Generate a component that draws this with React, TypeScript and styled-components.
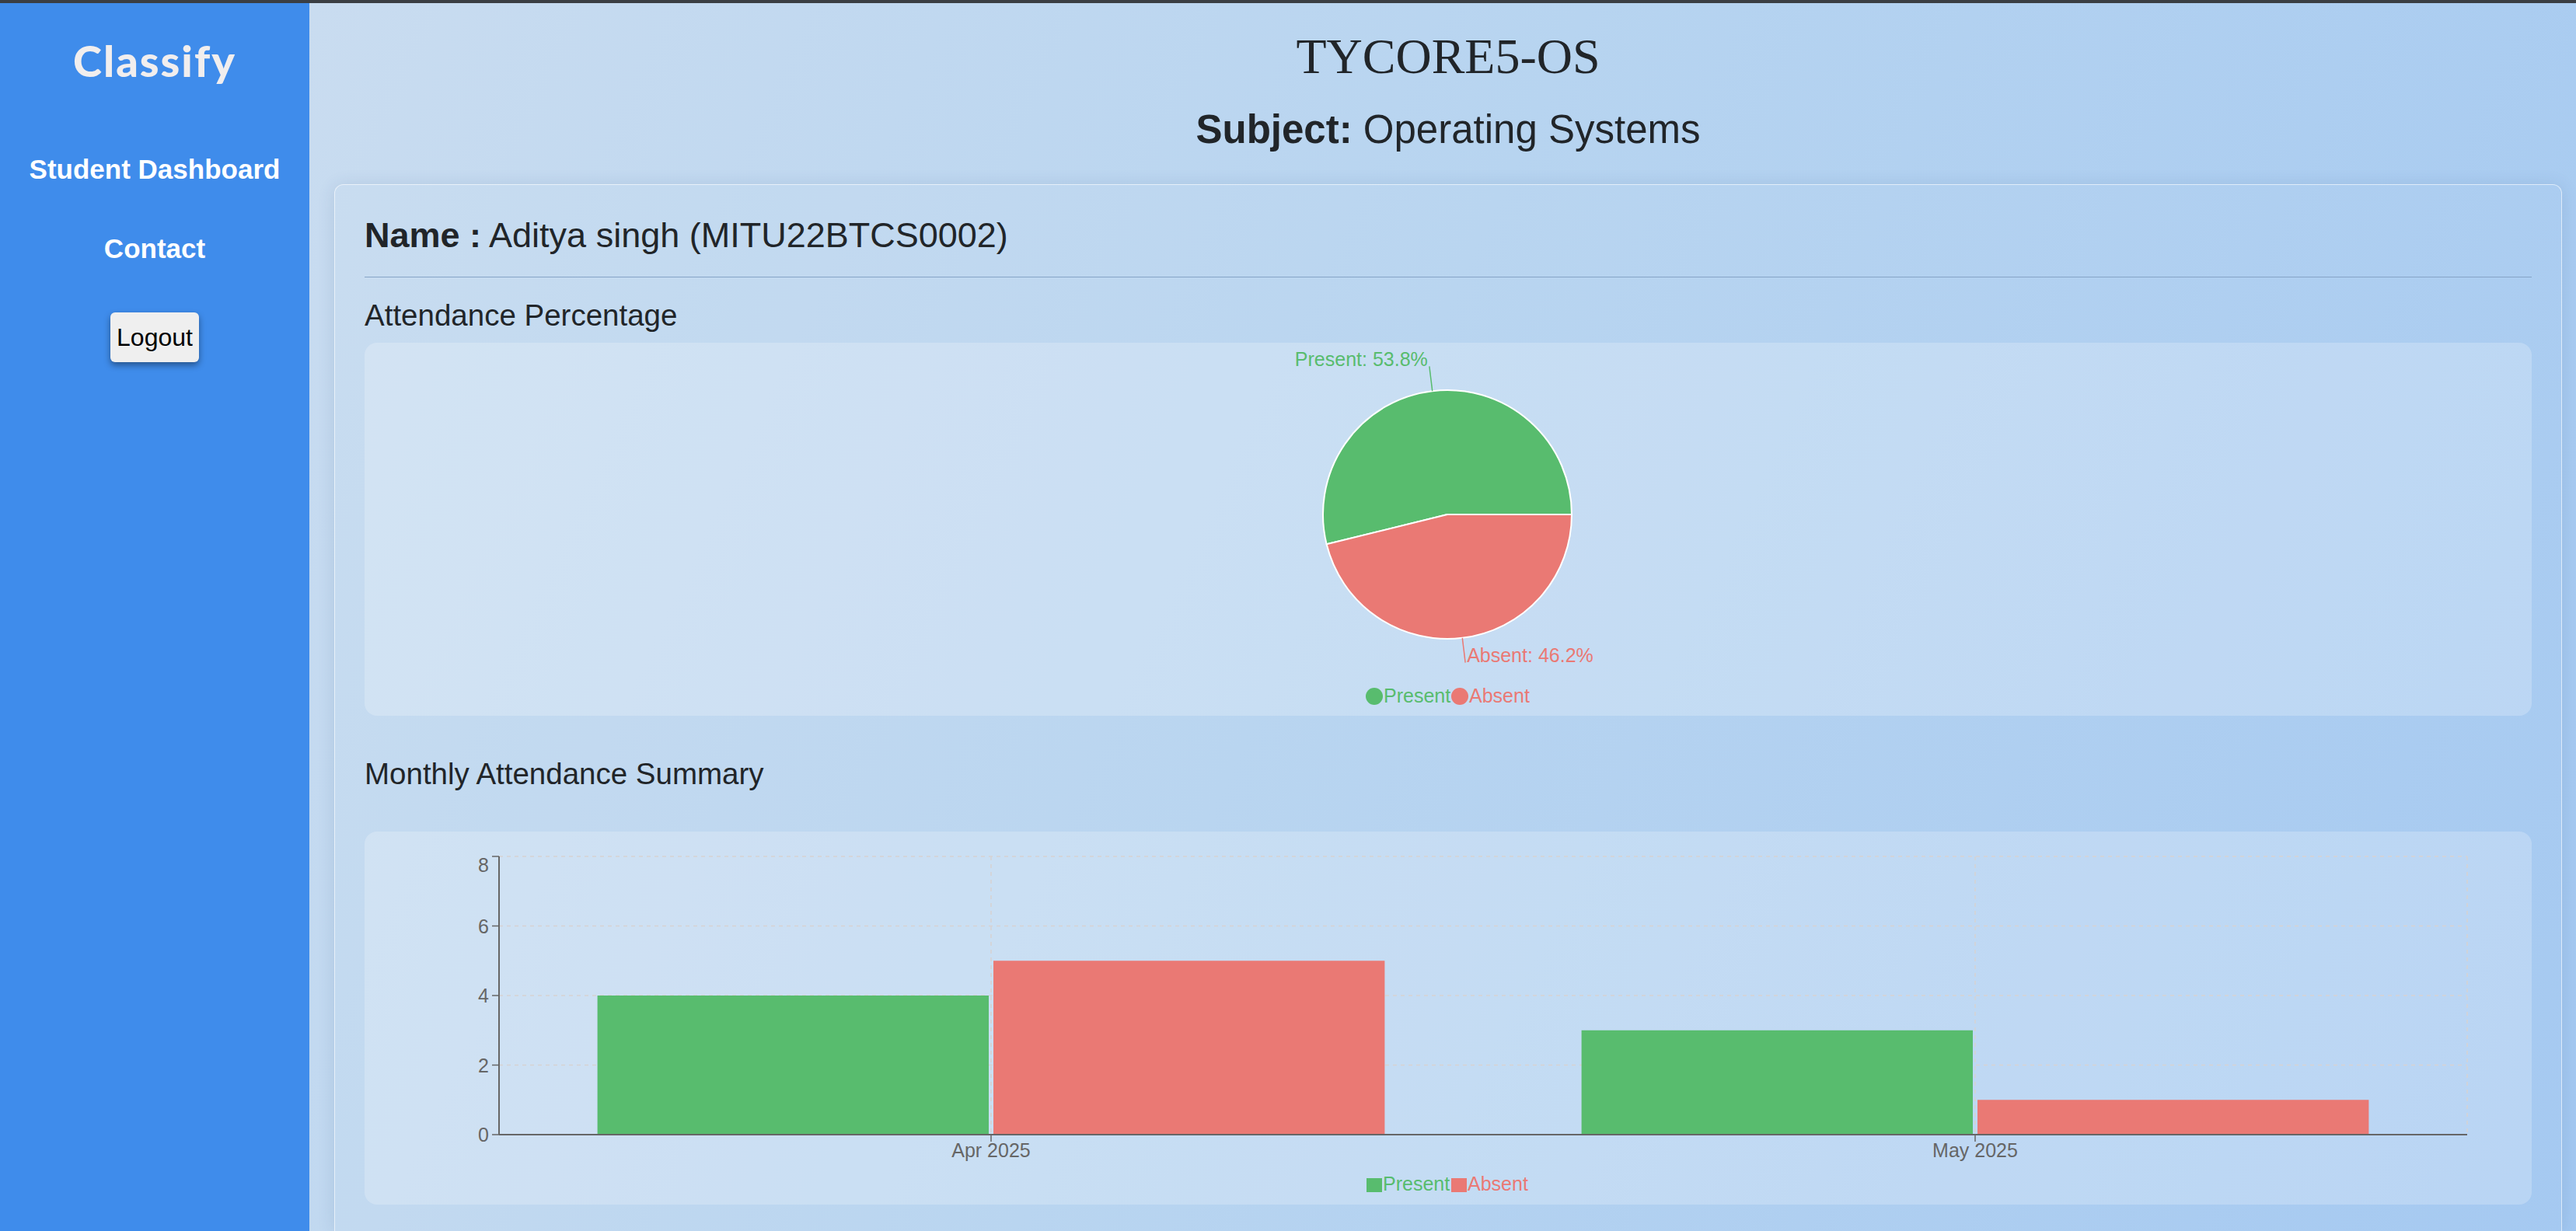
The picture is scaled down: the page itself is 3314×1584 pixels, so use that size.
import React from "react";
import styled, { createGlobalStyle } from "styled-components";

const GREEN = "#58bc6e";
const RED = "#ea7974";
const AXIS = "#666666";
const GRID = "#d6d2d2";

const summary = { present: 7, absent: 6 };

const monthly = [
  { month: "Apr 2025", present: 4, absent: 5 },
  { month: "May 2025", present: 3, absent: 1 },
];

const GlobalStyle = createGlobalStyle`
  html, body {
    margin: 0;
    padding: 0;
    overflow: hidden;
  }
  body {
    font-family: "Liberation Sans", Arial, sans-serif;
    color: #212529;
  }
  * {
    box-sizing: border-box;
  }
`;

const Page = styled.div`
  display: flex;
  height: 1584px;
  border-top: 4px solid #3a3e43;
`;

const Sidebar = styled.nav`
  width: 398px;
  flex-shrink: 0;
  background: #3f8ceb;
  display: flex;
  flex-direction: column;
  align-items: center;
  padding-top: 46px;
`;

const Brand = styled.div`
  font-family: Lato, "Open Sans", sans-serif;
  font-weight: 900;
  font-size: 56px;
  line-height: 1;
  letter-spacing: 2px;
  color: #f1eeee;
`;

const NavLink = styled.a<{ $gap: number }>`
  margin-top: ${(p) => p.$gap}px;
  font-size: 35px;
  font-weight: bold;
  line-height: 1;
  color: #ffffff;
  text-decoration: none;
  cursor: pointer;
`;

const LogoutButton = styled.button`
  margin-top: 65px;
  height: 64px;
  padding: 0 8px;
  font-family: "Liberation Sans", Arial, sans-serif;
  font-size: 32px;
  line-height: 1;
  color: #000;
  background: #efefef;
  border: none;
  border-radius: 6px;
  box-shadow: 0 4px 9px rgba(0, 0, 0, 0.4);
  cursor: pointer;
`;

const Main = styled.main`
  flex: 1;
  min-width: 0;
  overflow: hidden;
  display: flex;
  flex-direction: column;
  padding: 37px 18px 0 32px;
  background: linear-gradient(115deg, #c9dcf0 0%, #b7d4f0 45%, #a3c8f1 100%);
`;

const CourseCode = styled.h1`
  margin: 0;
  font-family: "Liberation Serif", "Times New Roman", serif;
  font-weight: normal;
  font-size: 64px;
  line-height: 1;
  text-align: center;
  color: #212529;
`;

const SubjectLine = styled.h2`
  margin: 36px 0 0;
  font-size: 51px;
  font-weight: normal;
  line-height: 1;
  text-align: center;
  color: #212529;

  strong {
    font-weight: bold;
  }
`;

const Card = styled.section`
  margin-top: 45px;
  flex: 1;
  padding: 42px 38px 0;
  border: 1px solid rgba(255, 255, 255, 0.6);
  border-bottom: none;
  border-radius: 12px 12px 0 0;
  background: rgba(255, 255, 255, 0.03);
  box-shadow: 0 2px 22px rgba(40, 80, 130, 0.14);
`;

const NameLine = styled.div`
  font-size: 45px;
  line-height: 1;
  color: #212529;

  strong {
    font-weight: bold;
  }
`;

const Divider = styled.hr`
  margin: 31px 0 0;
  border: none;
  border-top: 1px solid #86a4c7;
`;

const SectionTitle = styled.h3<{ $gap: number }>`
  margin: ${(p) => p.$gap}px 0 0;
  font-size: 38.5px;
  font-weight: normal;
  line-height: 1;
  color: #212529;
`;

const ChartBox = styled.div<{ $gap: number }>`
  margin-top: ${(p) => p.$gap}px;
  height: 480px;
  display: flex;
  justify-content: center;
  border-radius: 16px;
  background: rgba(255, 255, 255, 0.22);
  overflow: hidden;
`;

const ChartText = styled.text`
  font-family: "Liberation Sans", Arial, sans-serif;
  font-size: 25px;
`;

const polar = (cx: number, cy: number, r: number, deg: number) => {
  const a = (deg * Math.PI) / 180;
  return { x: cx + r * Math.cos(a), y: cy - r * Math.sin(a) };
};

const AttendancePie: React.FC = () => {
  const cx = 319;
  const cy = 221;
  const r = 160;
  const total = summary.present + summary.absent;
  const slices = [
    { name: "Present", value: summary.present, color: GREEN },
    { name: "Absent", value: summary.absent, color: RED },
  ];

  let start = 0;
  const drawn = slices.map((s) => {
    const sweep = (s.value / total) * 360;
    const end = start + sweep;
    const p1 = polar(cx, cy, r, start);
    const p2 = polar(cx, cy, r, end);
    const mid = start + sweep / 2;
    const inner = polar(cx, cy, r, mid);
    const outer = polar(cx, cy, r + 32, mid);
    const d = `M${cx},${cy} L${p1.x},${p1.y} A${r},${r} 0 ${sweep > 180 ? 1 : 0} 0 ${p2.x},${p2.y} Z`;
    start = end;
    return { ...s, d, inner, outer, pct: ((s.value / total) * 100).toFixed(1), right: outer.x > cx };
  });

  return (
    <svg width="640" height="480">
      {drawn.map((s) => (
        <path key={s.name} d={s.d} fill={s.color} stroke="#ffffff" strokeWidth="2" />
      ))}
      {drawn.map((s) => (
        <g key={`l-${s.name}`}>
          <line x1={s.inner.x} y1={s.inner.y} x2={s.outer.x} y2={s.outer.y} stroke={s.color} strokeWidth="1.5" />
          <ChartText
            x={s.right ? s.outer.x + 2 : s.outer.x - 2}
            y={s.right ? s.outer.y - 1 : s.outer.y}
            textAnchor={s.right ? "start" : "end"}
            fill={s.color}
          >
            {s.name}: {s.pct}%
          </ChartText>
        </g>
      ))}
      <circle cx="225" cy="455" r="11" fill={GREEN} />
      <ChartText x="237" y="463" fill={GREEN}>Present</ChartText>
      <circle cx="335" cy="455" r="11" fill={RED} />
      <ChartText x="347" y="463" fill={RED}>Absent</ChartText>
    </svg>
  );
};

const MonthlyBars: React.FC = () => {
  const W = 2788;
  const left = 173;
  const right = 2705;
  const top = 32;
  const bottom = 390;
  const max = 8;
  const yOf = (v: number) => bottom - (v / max) * (bottom - top);
  const band = (right - left) / monthly.length;
  const barW = (band * 0.8 - 6) / 2;
  const ticks = [0, 2, 4, 6, 8];

  return (
    <svg width="100%" height="480" viewBox={`0 0 ${W} 480`}>
      {ticks.slice(1).map((t) => (
        <line key={`g${t}`} x1={left} x2={right} y1={yOf(t)} y2={yOf(t)} stroke={GRID} strokeWidth="1.5" strokeDasharray="5 5" />
      ))}
      {monthly.map((m, i) => {
        const c = left + band * (i + 0.5);
        return <line key={`v${m.month}`} x1={c} x2={c} y1={top} y2={bottom} stroke={GRID} strokeWidth="1.5" strokeDasharray="5 5" />;
      })}
      <line x1={right} x2={right} y1={top} y2={bottom} stroke={GRID} strokeWidth="1.5" strokeDasharray="5 5" />

      {monthly.map((m, i) => {
        const x0 = left + band * i + band * 0.1;
        return (
          <g key={m.month}>
            <rect x={x0} y={yOf(m.present)} width={barW} height={bottom - yOf(m.present)} fill={GREEN} />
            <rect x={x0 + barW + 6} y={yOf(m.absent)} width={barW} height={bottom - yOf(m.absent)} fill={RED} />
          </g>
        );
      })}

      <line x1={left} x2={left} y1={top} y2={bottom} stroke={AXIS} strokeWidth="2" />
      <line x1={left} x2={right} y1={bottom} y2={bottom} stroke={AXIS} strokeWidth="2" />
      {ticks.map((t) => (
        <g key={`t${t}`}>
          <line x1={left - 9} x2={left} y1={yOf(t)} y2={yOf(t)} stroke={AXIS} strokeWidth="1.5" />
          <ChartText x={left - 13} y={t === max ? yOf(t) + 20 : yOf(t) + 9} textAnchor="end" fill={AXIS}>
            {t}
          </ChartText>
        </g>
      ))}
      {monthly.map((m, i) => {
        const c = left + band * (i + 0.5);
        return (
          <g key={`x${m.month}`}>
            <line x1={c} x2={c} y1={bottom} y2={bottom + 9} stroke={AXIS} strokeWidth="1.5" />
            <ChartText x={c} y={bottom + 29} textAnchor="middle" fill={AXIS}>
              {m.month}
            </ChartText>
          </g>
        );
      })}

      <rect x="1289" y="446" width="20" height="18" fill={GREEN} />
      <ChartText x="1310" y="462" fill={GREEN}>Present</ChartText>
      <rect x="1398" y="446" width="20" height="18" fill={RED} />
      <ChartText x="1419" y="462" fill={RED}>Absent</ChartText>
    </svg>
  );
};

const App: React.FC = () => {
  return (
    <>
      <GlobalStyle />
      <Page>
        <Sidebar>
          <Brand>Classify</Brand>
          <NavLink $gap={94}>Student Dashboard</NavLink>
          <NavLink $gap={67}>Contact</NavLink>
          <LogoutButton type="button">Logout</LogoutButton>
        </Sidebar>
        <Main>
          <CourseCode>TYCORE5-OS</CourseCode>
          <SubjectLine>
            <strong>Subject:</strong> Operating Systems
          </SubjectLine>
          <Card>
            <NameLine>
              <strong>Name :</strong> Aditya singh (MITU22BTCS0002)
            </NameLine>
            <Divider />
            <SectionTitle $gap={30}>Attendance Percentage</SectionTitle>
            <ChartBox $gap={15}>
              <AttendancePie />
            </ChartBox>
            <SectionTitle $gap={56}>Monthly Attendance Summary</SectionTitle>
            <ChartBox $gap={55}>
              <MonthlyBars />
            </ChartBox>
          </Card>
        </Main>
      </Page>
    </>
  );
};

export default App;
